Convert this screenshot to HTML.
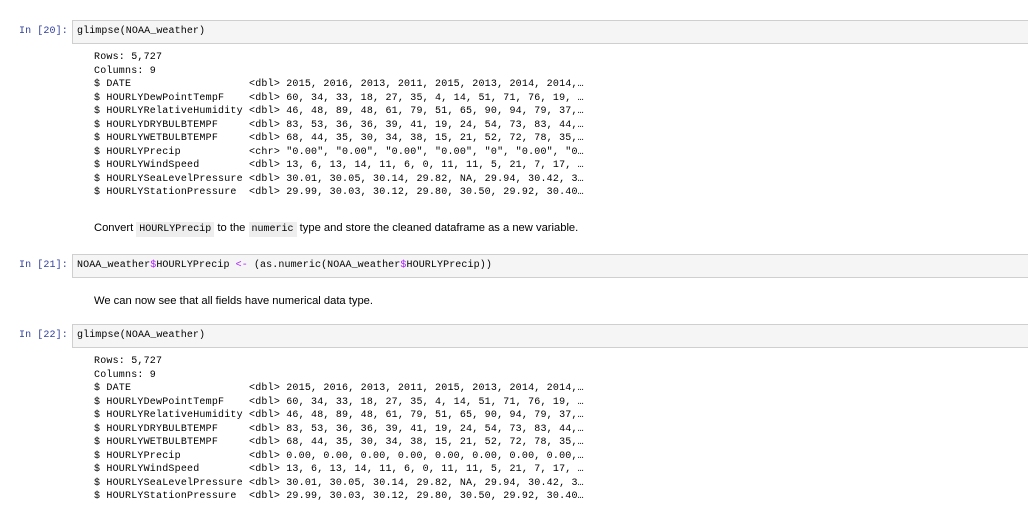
<!DOCTYPE html>
<html><head><style>
body{margin:0;width:1028px;height:508px;background:#fff;position:relative;overflow:hidden;font-family:"Liberation Mono",monospace;}
.p{position:absolute;left:19px;font-size:10px;color:#303F9F;letter-spacing:0.1px;}
.box{position:absolute;left:72px;width:970px;height:22px;background:#f5f5f5;border:1px solid #cfcfcf;border-right:none;}
.box span.c{position:absolute;left:4px;top:5px;font-size:10px;color:#000;letter-spacing:0.1px;white-space:pre;}
.out{position:absolute;left:94px;font-size:10px;line-height:13.5px;white-space:pre;color:#000;letter-spacing:0.2px;margin:0;font-family:"Liberation Mono",monospace;}
.md{position:absolute;left:94px;font-family:"Liberation Sans",sans-serif;font-size:11.2px;color:#000;}
.md code{font-family:"Liberation Mono",monospace;font-size:10px;background:#eee;padding:2px 3px;}
.pu{color:#AA22FF}
</style></head><body>
<div class="p" style="top:26px">In [20]:</div>
<div class="box" style="top:20px"><span class="c">glimpse(NOAA_weather)</span></div>
<pre class="out" style="top:51px">Rows: 5,727
Columns: 9
$ DATE                   &lt;dbl&gt; 2015, 2016, 2013, 2011, 2015, 2013, 2014, 2014,…
$ HOURLYDewPointTempF    &lt;dbl&gt; 60, 34, 33, 18, 27, 35, 4, 14, 51, 71, 76, 19, …
$ HOURLYRelativeHumidity &lt;dbl&gt; 46, 48, 89, 48, 61, 79, 51, 65, 90, 94, 79, 37,…
$ HOURLYDRYBULBTEMPF     &lt;dbl&gt; 83, 53, 36, 36, 39, 41, 19, 24, 54, 73, 83, 44,…
$ HOURLYWETBULBTEMPF     &lt;dbl&gt; 68, 44, 35, 30, 34, 38, 15, 21, 52, 72, 78, 35,…
$ HOURLYPrecip           &lt;chr&gt; "0.00", "0.00", "0.00", "0.00", "0", "0.00", "0…
$ HOURLYWindSpeed        &lt;dbl&gt; 13, 6, 13, 14, 11, 6, 0, 11, 11, 5, 21, 7, 17, …
$ HOURLYSeaLevelPressure &lt;dbl&gt; 30.01, 30.05, 30.14, 29.82, NA, 29.94, 30.42, 3…
$ HOURLYStationPressure  &lt;dbl&gt; 29.99, 30.03, 30.12, 29.80, 30.50, 29.92, 30.40…</pre>
<div class="md" style="top:222px">Convert <code>HOURLYPrecip</code> to the <code>numeric</code> type and store the cleaned dataframe as a new variable.</div>
<div class="p" style="top:260px">In [21]:</div>
<div class="box" style="top:254px"><span class="c">NOAA_weather<span class="pu">$</span>HOURLYPrecip <span class="pu">&lt;-</span> (as.numeric(NOAA_weather<span class="pu">$</span>HOURLYPrecip))</span></div>
<div class="md" style="top:295px">We can now see that all fields have numerical data type.</div>
<div class="p" style="top:330px">In [22]:</div>
<div class="box" style="top:324px"><span class="c">glimpse(NOAA_weather)</span></div>
<pre class="out" style="top:355px">Rows: 5,727
Columns: 9
$ DATE                   &lt;dbl&gt; 2015, 2016, 2013, 2011, 2015, 2013, 2014, 2014,…
$ HOURLYDewPointTempF    &lt;dbl&gt; 60, 34, 33, 18, 27, 35, 4, 14, 51, 71, 76, 19, …
$ HOURLYRelativeHumidity &lt;dbl&gt; 46, 48, 89, 48, 61, 79, 51, 65, 90, 94, 79, 37,…
$ HOURLYDRYBULBTEMPF     &lt;dbl&gt; 83, 53, 36, 36, 39, 41, 19, 24, 54, 73, 83, 44,…
$ HOURLYWETBULBTEMPF     &lt;dbl&gt; 68, 44, 35, 30, 34, 38, 15, 21, 52, 72, 78, 35,…
$ HOURLYPrecip           &lt;dbl&gt; 0.00, 0.00, 0.00, 0.00, 0.00, 0.00, 0.00, 0.00,…
$ HOURLYWindSpeed        &lt;dbl&gt; 13, 6, 13, 14, 11, 6, 0, 11, 11, 5, 21, 7, 17, …
$ HOURLYSeaLevelPressure &lt;dbl&gt; 30.01, 30.05, 30.14, 29.82, NA, 29.94, 30.42, 3…
$ HOURLYStationPressure  &lt;dbl&gt; 29.99, 30.03, 30.12, 29.80, 30.50, 29.92, 30.40…</pre>
</body></html>
